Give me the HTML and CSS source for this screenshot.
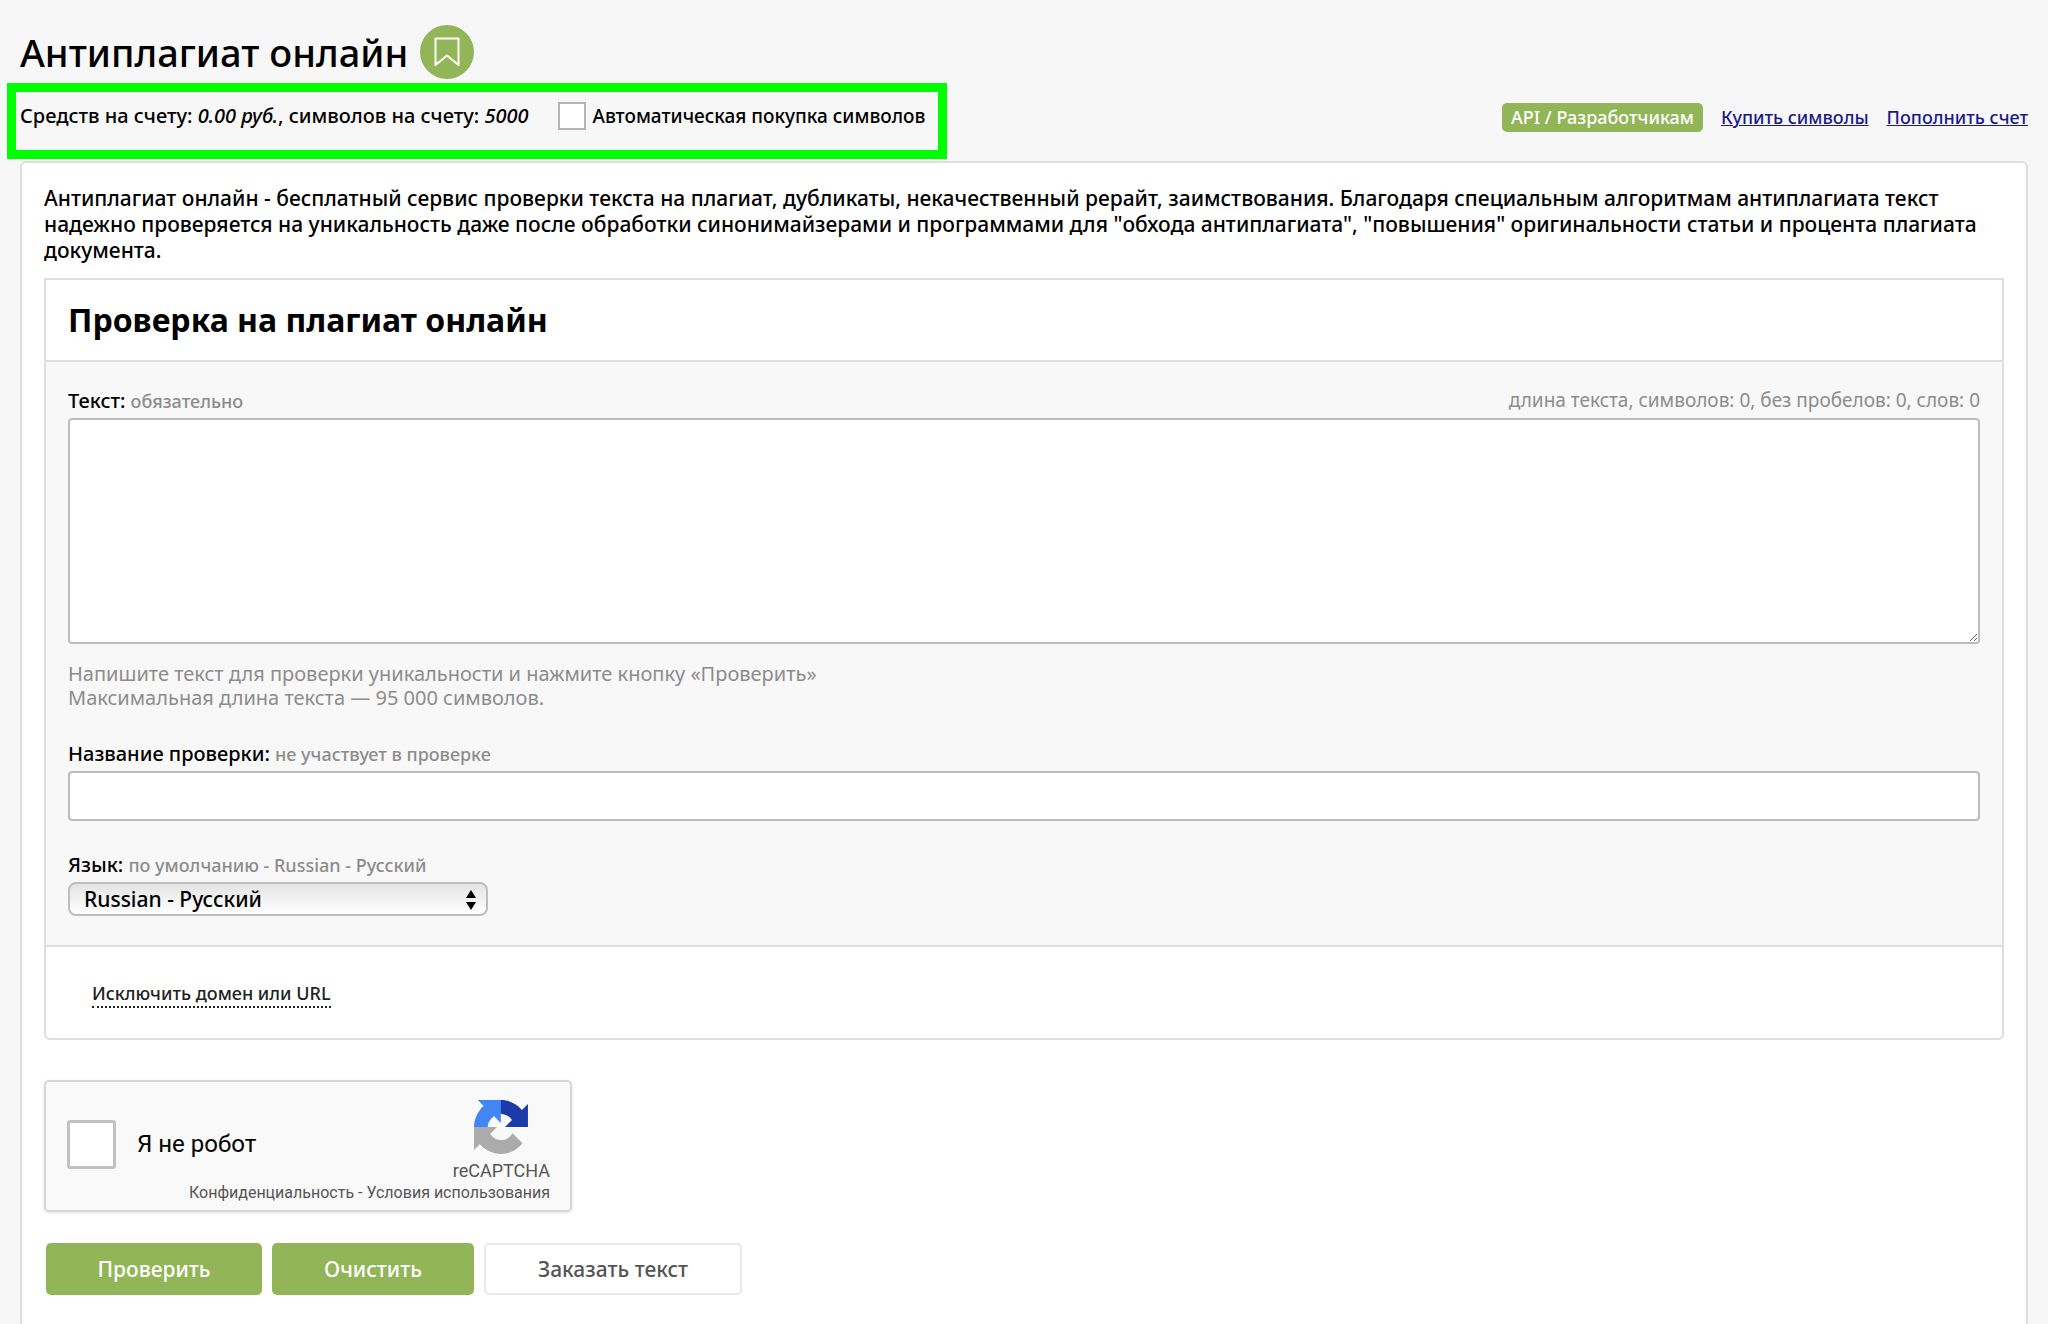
FILE: index.html
```html
<!DOCTYPE html>
<html lang="ru">
<head>
<meta charset="utf-8">
<meta name="viewport" content="width=device-width, initial-scale=1">
<title>Антиплагиат онлайн</title>
<link rel="stylesheet" href="styles.css">
</head>
<body>
<header class="page-head">
  <div class="title-row">
    <h1 class="title">Антиплагиат онлайн</h1>
    <button class="bookmark" type="button" aria-label="Добавить в закладки">
      <svg width="26" height="30" viewBox="0 0 26 30" fill="none" stroke="currentColor" stroke-width="2" stroke-linejoin="round"><path d="M1.500 1.500h23v26.500l-11.500-9.500-11.500 9.500z"/></svg>
    </button>
  </div>
  <div class="account-row">
    <div class="account">
      <span>Средств на счету: <em>0.00 руб.</em>, символов на счету: <em>5000</em></span>
      <label class="auto-buy"><input class="tick" type="checkbox">Автоматическая покупка символов</label>
    </div>
    <nav class="account-links">
      <a class="badge" href="#">API / Разработчикам</a>
      <a class="link" href="#">Купить символы</a>
      <a class="link" href="#">Пополнить счет</a>
    </nav>
  </div>
</header>
<main class="card">
  <p class="intro">Антиплагиат онлайн - бесплатный сервис проверки текста на плагиат, дубликаты, некачественный рерайт, заимствования. Благодаря специальным алгоритмам антиплагиата текст надежно проверяется на уникальность даже после обработки синонимайзерами и программами для "обхода антиплагиата", "повышения" оригинальности статьи и процента плагиата документа.</p>
  <form>
    <section class="panel">
      <h2 class="panel-title">Проверка на плагиат онлайн</h2>
      <div class="panel-body">
        <div class="field">
          <div class="field-head">
            <label for="text">Текст: <small class="note">обязательно</small></label>
            <span class="counter">длина текста, символов: 0, без пробелов: 0, слов: 0</span>
          </div>
          <textarea class="box area" id="text"></textarea>
          <p class="hint">Напишите текст для проверки уникальности и нажмите кнопку «Проверить»<br>Максимальная длина текста — 95 000 символов.</p>
        </div>
        <div class="field">
          <div class="field-head"><label for="name">Название проверки: <small class="note">не участвует в проверке</small></label></div>
          <input class="box line" id="name" type="text">
        </div>
        <div class="field">
          <div class="field-head"><label for="lang">Язык: <small class="note">по умолчанию - Russian - Русский</small></label></div>
          <div class="select">
            <select id="lang"><option>Russian - Русский</option></select>
            <svg class="arrows" width="12" height="20" viewBox="0 0 12 20"><path d="M6 0l5 8H1zM6 20l5-8H1z"/></svg>
          </div>
        </div>
      </div>
      <div class="panel-foot"><a class="toggle" href="#">Исключить домен или URL</a></div>
    </section>
    <div class="captcha">
      <label class="robot"><input class="robot-tick" type="checkbox">Я не робот</label>
      <div class="brand">
        <svg width="54" height="54" viewBox="0 0 64 64"><path fill="#1c3aa9" d="M64 31.955l-.033-1.370V4.687l-7.160 7.160C50.948 4.674 42.033.093 32.050.093c-10.400 0-19.622 4.960-25.458 12.640l11.736 11.860a15.550 15.550 0 0 1 4.754-5.334c2.050-1.600 4.952-2.906 8.968-2.906.485 0 .860.057 1.135.163 4.976.393 9.288 3.140 11.828 7.124l-8.307 8.307L64 31.953"/><path fill="#4285f4" d="M31.862.094l-1.370.033H4.594l7.160 7.160C4.580 13.147 0 22.060 0 32.046c0 10.400 4.960 19.622 12.640 25.458L24.500 45.768a15.550 15.550 0 0 1-5.334-4.754c-1.600-2.050-2.906-4.952-2.906-8.968 0-.485.057-.860.163-1.135.393-4.976 3.140-9.288 7.124-11.828l8.307 8.307L31.860.095"/><path fill="#ababab" d="M.001 32.045l.033 1.370v25.898l7.160-7.160c5.860 7.173 14.774 11.754 24.760 11.754 10.400 0 19.622-4.960 25.458-12.640l-11.736-11.860a15.550 15.550 0 0 1-4.754 5.334c-2.050 1.600-4.952 2.906-8.968 2.906-.485 0-.860-.057-1.135-.163-4.976-.393-9.288-3.140-11.828-7.124l8.307-8.307c-10.522.040-22.400.066-27.295-.005"/></svg>
        <span>reCAPTCHA</span>
      </div>
      <div class="terms"><a href="#">Конфиденциальность</a> - <a href="#">Условия использования</a></div>
    </div>
    <div class="actions">
      <button class="btn btn-main" type="submit">Проверить</button>
      <button class="btn btn-clear" type="reset">Очистить</button>
      <button class="btn btn-plain" type="button">Заказать текст</button>
    </div>
  </form>
</main>
</body>
</html>
```
FILE: styles.css
```css
:root {
  --green: #92b558;
  --line: #dedede;
  --muted: #8c8c8c;
}

* { box-sizing: border-box; }

body {
  margin: 0;
  min-height: 100vh;
  display: flex;
  flex-direction: column;
  background: #f7f7f7;
  color: #000;
  font: 500 20px/26px "Noto Sans", "Open Sans", sans-serif;
}

h1, h2, p { margin: 0; }
button, input, select, textarea { font: inherit; }

.page-head { padding: 25px 20px 0 7px; }

.title-row {
  display: flex;
  align-items: center;
  gap: 12px;
  height: 54px;
  padding-left: 13px;
}

.title { font-size: 38px; line-height: 54px; font-weight: 500; }

.bookmark {
  display: flex;
  align-items: center;
  justify-content: center;
  width: 54px;
  height: 54px;
  padding: 0;
  border: 0;
  border-radius: 50%;
  background: var(--green);
  color: #fff;
}

.account-row {
  display: flex;
  align-items: center;
  justify-content: space-between;
  margin-top: 4px;
}

.account {
  display: flex;
  align-items: center;
  gap: 30px;
  width: 940px;
  height: 76px;
  padding: 0 4px 10px;
  border: 9px solid #0f0;
  white-space: nowrap;
}

.auto-buy {
  display: flex;
  align-items: center;
  gap: 6px;
  font-size: 19px;
}

.tick, .robot-tick {
  appearance: none;
  margin: 0;
  background: #fff;
}

.tick { width: 28px; height: 28px; border: 2px solid #b4b4b4; }

.account-links {
  display: flex;
  align-items: center;
  gap: 18px;
  padding-bottom: 8px;
  font-size: 18px;
}

.badge {
  padding: 1px 9px 2px;
  border-radius: 5px;
  background: var(--green);
  color: #fff;
  text-decoration: none;
}

.link { color: #1a1a8c; }

.card {
  flex: 1;
  margin: 2px 20px 0;
  padding: 22px 22px 30px;
  border: 2px solid var(--line);
  border-bottom: 0;
  border-radius: 6px 6px 0 0;
  background: #fff;
}

.intro { padding-bottom: 15px; font-size: 21px; }

.panel { border: 2px solid var(--line); border-radius: 0 0 6px 6px; }

.panel-title {
  padding: 20px 22px;
  border-bottom: 2px solid var(--line);
  font-size: 32px;
  line-height: 40px;
  font-weight: 700;
}

.panel-body {
  display: flex;
  flex-direction: column;
  gap: 29px;
  padding: 24px 22px 29px;
  border-bottom: 2px solid var(--line);
  background: #f8f8f8;
}

.field-head {
  display: flex;
  justify-content: space-between;
  padding-bottom: 3px;
  line-height: 29px;
}

.note, .counter { color: var(--muted); }
.note { font-size: 18px; line-height: 18px; }
.counter { font-size: 19px; font-weight: 400; }

.box {
  display: block;
  width: 100%;
  border: 2px solid #bdbdbd;
  border-radius: 4px;
  background: #fff;
}

.area { height: 226px; resize: vertical; }
.line { height: 50px; }

.hint {
  padding-top: 18px;
  color: var(--muted);
  font-weight: 400;
  line-height: 24px;
}

.select { position: relative; width: 420px; }

.select select {
  display: block;
  appearance: none;
  width: 100%;
  height: 34px;
  padding: 0 14px;
  border: 2px solid #bdbdbd;
  border-radius: 8px;
  background: linear-gradient(#e4e4e4, #fff);
  color: #000;
  font-size: 21px;
  line-height: 28px;
}

.arrows {
  position: absolute;
  right: 11px;
  top: 8px;
  pointer-events: none;
}

.panel-foot { padding: 33px 46px 30px; }

.toggle {
  display: inline-block;
  border-bottom: 2px dotted #222;
  color: #222;
  font-size: 18px;
  line-height: 26px;
  text-decoration: none;
}

.captcha {
  display: grid;
  grid-template-columns: 1fr auto;
  width: 528px;
  margin-top: 40px;
  padding: 18px 20px 6px 21px;
  border: 2px solid #d6d6d6;
  border-radius: 5px;
  background: #f9f9f9;
  box-shadow: 0 1px 4px rgba(0, 0, 0, .1);
  font-family: Roboto, sans-serif;
  font-weight: 400;
}

.robot {
  display: flex;
  align-items: center;
  gap: 21px;
  padding-top: 6px;
  font-size: 24px;
}

.robot-tick {
  width: 49px;
  height: 49px;
  border: 3px solid #c1c1c1;
  border-radius: 3px;
}

.brand {
  display: flex;
  flex-direction: column;
  align-items: center;
  gap: 6px;
  color: #555;
  font-size: 18px;
  line-height: 22px;
}

.terms {
  grid-column: 1 / -1;
  color: #555;
  font-size: 16px;
  line-height: 22px;
  text-align: right;
}

.terms a { color: inherit; text-decoration: none; }

.actions { display: flex; gap: 10px; margin-top: 31px; padding-left: 2px; }

.btn {
  height: 52px;
  padding: 0;
  border: 0;
  border-radius: 5px;
  background: var(--green);
  color: #fff;
  font-size: 21px;
}

.btn-main { width: 216px; }
.btn-clear { width: 202px; }

.btn-plain {
  width: 258px;
  border: 2px solid #e8e8e8;
  background: #fff;
  color: #555;
}
```
